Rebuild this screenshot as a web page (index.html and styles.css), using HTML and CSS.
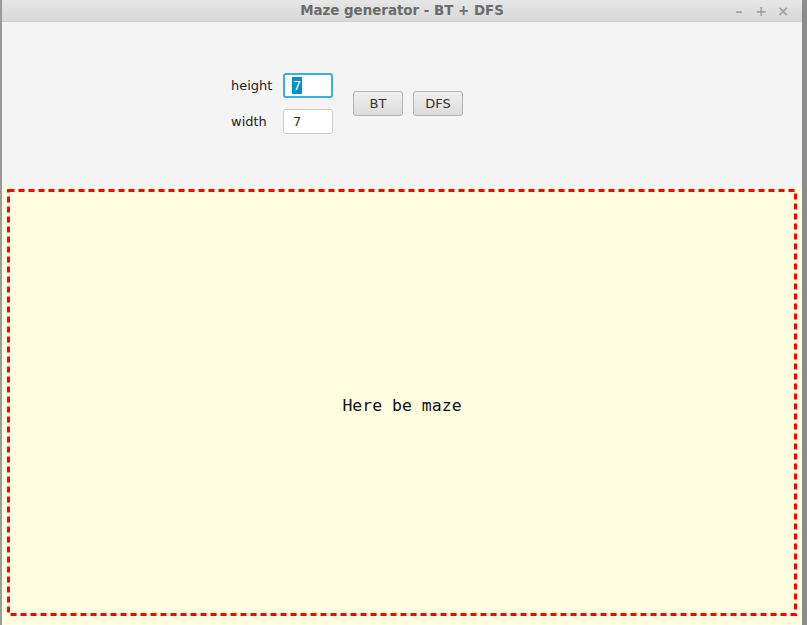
FILE: index.html
```html
<!DOCTYPE html>
<html>
<head>
<meta charset="utf-8">
<link rel="stylesheet" href="styles.css">
</head>
<body>
<div class="window">
  <div class="titlebar">
    <div></div>
    <div class="title">Maze generator - BT + DFS</div>
    <div class="controls"><span class="ctl">&#8211;</span><span class="ctl">+</span><span class="ctl">&#215;</span></div>
  </div>
  <div class="content">
    <div class="toolbar">
      <div class="form">
        <label class="lbl">height</label>
        <div class="field focused"><span class="sel">7</span></div>
        <label class="lbl">width</label>
        <div class="field">7</div>
      </div>
      <div class="buttons">
        <button class="btn">BT</button>
        <button class="btn">DFS</button>
      </div>
    </div>
    <div class="maze">
      <svg class="dashes" width="800" height="437" viewBox="0 0 800 437">
        <rect x="6.5" y="3.5" width="787" height="424" fill="none" stroke="#ff0000" stroke-width="3" stroke-dasharray="6 4"/>
      </svg>
      <span class="maze-text">Here be maze</span>
    </div>
  </div>
</div>
</body>
</html>
```
FILE: styles.css
```css
html, body {
  margin: 0;
  padding: 0;
  width: 807px;
  height: 625px;
  overflow: hidden;
  background: #8a8a8a;
}
.window {
  width: 807px;
  height: 625px;
  display: flex;
  flex-direction: column;
  box-sizing: border-box;
  border-left: 2px solid #9a9a9a;
  border-right: 5px solid #8c8c8c;
  background: #f4f4f4;
}
.titlebar {
  height: 22px;
  flex: none;
  display: grid;
  grid-template-columns: 1fr auto 1fr;
  align-items: center;
  background: linear-gradient(#e6e6e6, #d8d8d8);
  border-bottom: 1px solid #cfcfcf;
  box-sizing: border-box;
}
.title {
  font-family: "DejaVu Sans", sans-serif;
  font-weight: bold;
  font-size: 13.4px;
  color: #6a6a6a;
  line-height: 22px;
}
.controls {
  display: flex;
  justify-content: flex-end;
  gap: 8px;
  padding-right: 12px;
}
.ctl {
  width: 14px;
  text-align: center;
  font-family: "DejaVu Sans", sans-serif;
  font-weight: bold;
  font-size: 14px;
  color: #a3a3a3;
  line-height: 22px;
}
.content {
  flex: 1;
  display: flex;
  flex-direction: column;
}
.toolbar {
  height: 165px;
  flex: none;
  display: flex;
  align-items: center;
  padding-left: 229px;
  box-sizing: border-box;
  padding-bottom: 3px;
  gap: 20px;
}
.form {
  display: grid;
  grid-template-columns: 52px 50px;
  grid-auto-rows: 25px;
  row-gap: 11px;
  align-items: center;
}
.lbl {
  font-family: "DejaVu Sans", sans-serif;
  font-size: 13px;
  color: #222;
}
.field {
  height: 25px;
  box-sizing: border-box;
  border: 1px solid #cbcbcb;
  border-radius: 3px;
  background: #fff;
  font-family: "DejaVu Sans", sans-serif;
  font-size: 13px;
  color: #333;
  padding-left: 9px;
  line-height: 23px;
}
.field.focused {
  border: 2px solid #3ab0e0;
  padding-left: 7px;
  line-height: 21px;
}
.sel {
  background: #0093c9;
  color: #fff;
  padding: 1px 1px;
}
.buttons {
  display: flex;
  gap: 10px;
}
.btn {
  width: 50px;
  height: 25px;
  border: 1px solid #b4b4b4;
  border-radius: 3px;
  background: linear-gradient(#f0f0f0, #dcdcdc);
  font-family: "DejaVu Sans", sans-serif;
  font-size: 13px;
  color: #333;
  padding: 0;
}
.maze {
  flex: 1;
  position: relative;
  background: #fffde0;
  display: flex;
  align-items: center;
  justify-content: center;
}
.dashes {
  position: absolute;
  left: 0;
  top: 0;
}
.maze-text {
  font-family: "DejaVu Sans Mono", monospace;
  font-size: 16.5px;
  color: #111;
  margin-top: -2px;
}
```
